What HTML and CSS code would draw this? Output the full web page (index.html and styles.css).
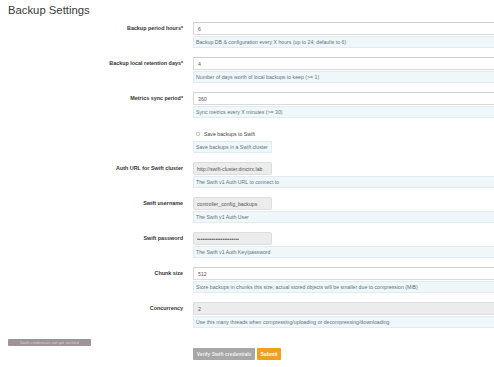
FILE: index.html
```html
<!DOCTYPE html>
<html lang="en">
<head>
  <meta charset="UTF-8">
  <meta name="viewport" content="width=device-width, initial-scale=1.0">
  <title>Backup Settings</title>
  <link rel="stylesheet" href="styles.css">
</head>
<body>
  <h1 class="page-title">Backup Settings</h1>

  <form class="settings-form">
    <div class="form-row">
      <label class="row-label">Backup period hours*</label>
      <div class="row-field">
        <input class="field wide" type="text" value="6">
        <div class="help wide">Backup DB &amp; configuration every X hours (up to 24; defaults to 6)</div>
      </div>
    </div>

    <div class="form-row">
      <label class="row-label">Backup local retention days*</label>
      <div class="row-field">
        <input class="field wide" type="text" value="4">
        <div class="help wide">Number of days worth of local backups to keep (&gt;= 1)</div>
      </div>
    </div>

    <div class="form-row">
      <label class="row-label">Metrics sync period*</label>
      <div class="row-field">
        <input class="field wide" type="text" value="360">
        <div class="help wide">Sync metrics every X minutes (&gt;= 30)</div>
      </div>
    </div>

    <div class="form-row">
      <span class="row-label"></span>
      <div class="row-field">
        <label class="check-line"><input class="check" type="checkbox"> Save backups to Swift</label>
        <div class="help short">Save backups in a Swift cluster</div>
      </div>
    </div>

    <div class="form-row">
      <label class="row-label">Auth URL for Swift cluster</label>
      <div class="row-field">
        <input class="field short disabled" type="text" value="http://swift-cluster.dmctrx.lab" readonly>
        <div class="help wide">The Swift v1 Auth URL to connect to</div>
      </div>
    </div>

    <div class="form-row">
      <label class="row-label">Swift username</label>
      <div class="row-field">
        <input class="field short disabled" type="text" value="controller_config_backups" readonly>
        <div class="help wide">The Swift v1 Auth User</div>
      </div>
    </div>

    <div class="form-row">
      <label class="row-label">Swift password</label>
      <div class="row-field">
        <input class="field short disabled" type="password" value="controllerconfigbackups" readonly>
        <div class="help wide">The Swift v1 Auth Key/password</div>
      </div>
    </div>

    <div class="form-row">
      <label class="row-label">Chunk size</label>
      <div class="row-field">
        <input class="field wide" type="text" value="512">
        <div class="help wide">Store backups in chunks this size; actual stored objects will be smaller due to compression (MiB)</div>
      </div>
    </div>

    <div class="form-row">
      <label class="row-label">Concurrency</label>
      <div class="row-field">
        <input class="field wide disabled" type="text" value="2" readonly>
        <div class="help wide">Use this many threads when compressing/uploading or decompressing/downloading</div>
      </div>
    </div>

    <div class="form-actions">
      <div class="status-cell">
        <span class="badge">Swift credentials not yet verified</span>
      </div>
      <div class="buttons">
        <button class="btn btn-grey" type="button">Verify Swift credentials</button>
        <button class="btn btn-orange" type="submit">Submit</button>
      </div>
    </div>
  </form>
</body>
</html>
```

FILE: styles.css
```css
html {
  overflow: hidden;
}
body {
  margin: 0;
  padding: 0 0 0 8px;
  background-color: #fff;
  font-family: 'Liberation Sans', Arial, sans-serif;
  color: #333;
}
.page-title {
  margin: 0;
  padding-top: 3px;
  font-size: 11.3px;
  line-height: 14px;
  font-weight: normal;
  color: #3a3a3a;
}
.settings-form {
  margin-top: 5px;
}
.form-row {
  display: grid;
  grid-template-columns: 185px 1fr;
  margin-bottom: 9px;
}
.row-label {
  padding-right: 10px;
  height: 13px;
  line-height: 13px;
  text-align: right;
  font-size: 5.4px;
  font-weight: bold;
  color: #333;
  white-space: nowrap;
}
.row-field {
  display: flex;
  flex-direction: column;
  align-items: flex-start;
}
.field {
  box-sizing: border-box;
  height: 13px;
  margin: 0;
  padding: 0 4px;
  border: 1px solid #dadada;
  border-top-color: #cfcfcf;
  border-radius: 1px;
  background-color: #fff;
  font-family: 'Liberation Sans', Arial, sans-serif;
  font-size: 5.2px;
  color: #555;
  outline: none;
}
.field.wide {
  width: calc(100% + 20px);
}
.field.short {
  width: 79px;
  border-radius: 2px;
  padding: 0 3px;
}
.field.disabled {
  background-color: #ececec;
  border-color: #dedede;
}
.help {
  box-sizing: border-box;
  height: 12px;
  margin-top: 1px;
  padding: 0 2px;
  line-height: 10px;
  border: 1px solid #e0ecf2;
  background-color: #eff7fa;
  font-size: 5.2px;
  color: #62737b;
  white-space: nowrap;
  overflow: hidden;
}
.help.wide {
  width: calc(100% + 20px);
}
.help.short {
  width: 79px;
}
.check-line {
  display: flex;
  align-items: center;
  gap: 4px;
  height: 13px;
  padding-left: 3px;
  font-size: 5.2px;
  color: #444;
}
.check {
  appearance: none;
  width: 4px;
  height: 4px;
  margin: 1px 0 0;
  border: 1px solid #c8c8c8;
  border-radius: 1px;
  background-color: #f4f4f4;
}
.form-actions {
  display: grid;
  grid-template-columns: 185px 1fr;
  align-items: start;
}
.badge {
  display: block;
  width: 83px;
  height: 7px;
  line-height: 7px;
  margin-top: 2px;
  border-radius: 1px;
  background-color: #9e9396;
  color: #d9d2d4;
  font-size: 4.2px;
  text-align: center;
  white-space: nowrap;
  overflow: hidden;
}
.buttons {
  display: flex;
  gap: 2px;
  margin-top: 11px;
}
.btn {
  height: 12px;
  padding: 0;
  border: 0;
  border-radius: 1px;
  font-family: 'Liberation Sans', Arial, sans-serif;
  font-size: 5px;
  font-weight: bold;
  color: #fff;
  white-space: nowrap;
}
.btn-grey {
  width: 62px;
  background-color: #a8a6a6;
  color: #eeeeee;
}
.btn-orange {
  width: 24px;
  background-color: #f0a01e;
}
```
